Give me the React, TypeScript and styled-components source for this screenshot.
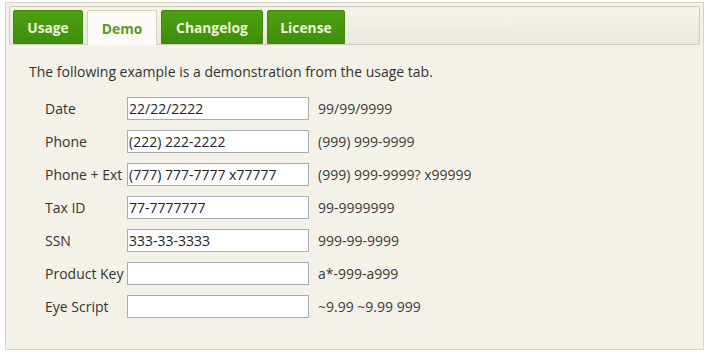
import React from "react";
import styled, { createGlobalStyle } from "styled-components";

const Global = createGlobalStyle`
  html, body { margin: 0; padding: 0; background: #ffffff; }
  body { font-family: "Open Sans", "Noto Sans", sans-serif; }
`;

const Panel = styled.div`
  box-sizing: border-box;
  margin: 2px 0 0 5px;
  width: 699px;
  height: 348px;
  border: 1px solid #d9d5c6;
  background: #f4f2e8;
  padding: 3px;
`;

const TabBar = styled.ul`
  box-sizing: border-box;
  list-style: none;
  margin: 0;
  height: 39px;
  padding: 3px 3px 0 3px;
  display: flex;
  gap: 4px;
  align-items: flex-end;
  border: 1px solid #d0ccbd;
  border-radius: 2px;
  background: linear-gradient(#f5f3ed, #ebe8dd);
`;

const Tab = styled.li<{ $active?: boolean; $w: number }>`
  box-sizing: border-box;
  height: ${(p) => (p.$active ? "35px" : "34px")};
  margin-bottom: ${(p) => (p.$active ? "-1px" : "0")};
  width: ${(p) => p.$w}px;
  display: flex;
  align-items: center;
  justify-content: center;
  padding-top: 1px;
  font-size: 13.8px;
  font-weight: 700;
  color: ${(p) => (p.$active ? "#5b9a1a" : "#eaf6d4")};
  background: ${(p) =>
    p.$active ? "#fbfaf6" : "linear-gradient(#4f9f12, #3f8e0c)"};
  border: 1px solid ${(p) => (p.$active ? "#d5d1c2" : "#3d8a0b")};
  border-bottom: ${(p) => (p.$active ? "none" : "1px solid #3d8a0b")};
  border-radius: 2px 2px 0 0;
`;

const Body = styled.div`
  padding: 18px 0 0 20px;
  color: #333333;
  font-size: 14px;
`;

const Intro = styled.p`
  margin: 0 0 16px 0;
  line-height: 18px;
`;

const Form = styled.div`
  display: grid;
  grid-template-columns: 82px 182px auto;
  column-gap: 9px;
  row-gap: 10px;
  padding-left: 16px;
  align-items: center;
`;

const Label = styled.label`
  line-height: 23px;
  white-space: nowrap;
`;

const Input = styled.input`
  box-sizing: border-box;
  width: 182px;
  height: 23px;
  margin: 0 0 0 -9px;
  border: 1px solid #a6acb3;
  background: #ffffff;
  padding: 0 1px;
  font-family: "Open Sans", "Noto Sans", sans-serif;
  font-size: 14px;
  color: #222222;
  outline: none;
`;

const Mask = styled.span`
  margin-left: -9px;
  line-height: 23px;
  color: #3a3a3a;
`;

const tabs = [
  { name: "Usage", w: 70 },
  { name: "Demo", w: 70, active: true },
  { name: "Changelog", w: 102 },
  { name: "License", w: 78 },
];

const rows = [
  { label: "Date", value: "22/22/2222", mask: "99/99/9999" },
  { label: "Phone", value: "(222) 222-2222", mask: "(999) 999-9999" },
  { label: "Phone + Ext", value: "(777) 777-7777 x77777", mask: "(999) 999-9999? x99999" },
  { label: "Tax ID", value: "77-7777777", mask: "99-9999999" },
  { label: "SSN", value: "333-33-3333", mask: "999-99-9999" },
  { label: "Product Key", value: "", mask: "a*-999-a999" },
  { label: "Eye Script", value: "", mask: "~9.99 ~9.99 999" },
];

export default function App() {
  return (
    <>
      <Global />
      <Panel>
        <TabBar>
          {tabs.map((t) => (
            <Tab key={t.name} $active={t.active} $w={t.w}>
              {t.name}
            </Tab>
          ))}
        </TabBar>
        <Body>
          <Intro>The following example is a demonstration from the usage tab.</Intro>
          <Form>
            {rows.map((r) => (
              <React.Fragment key={r.label}>
                <Label>{r.label}</Label>
                <Input defaultValue={r.value} />
                <Mask>{r.mask}</Mask>
              </React.Fragment>
            ))}
          </Form>
        </Body>
      </Panel>
    </>
  );
}
